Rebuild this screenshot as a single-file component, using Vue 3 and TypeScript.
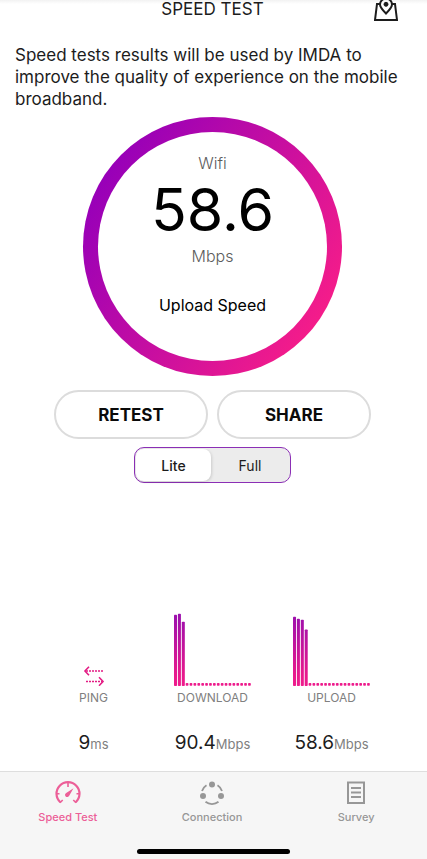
<script setup lang="ts">
import { ref } from 'vue'

interface Stat {
  label: string
  value: string
  unit: string
  bars: number[]
}

const mode = ref<'Lite' | 'Full'>('Lite')
const modes = ['Lite', 'Full'] as const

const idle = (count: number): number[] => Array.from({ length: count }, () => 3)

const stats: Stat[] = [
  { label: 'PING', value: '9', unit: 'ms', bars: [] },
  { label: 'DOWNLOAD', value: '90.4', unit: 'Mbps', bars: [73, 74, 66, ...idle(17)] },
  { label: 'UPLOAD', value: '58.6', unit: 'Mbps', bars: [71, 69, 68, 58, ...idle(16)] },
]
</script>

<template>
  <div class="screen">
    <header class="top">
      <h1>SPEED TEST</h1>
      <button class="map" type="button" aria-label="Map">
        <svg width="24" height="28" viewBox="0 0 24 28" fill="none" stroke="#1c1c1c" stroke-width="2">
          <path d="M6 11H3L1 27H23L21 11H18" />
          <path d="M12 20.500C8.500 17 6 14.500 6 11.500A6 6 0 0 1 18 11.500C18 14.500 15.500 17 12 20.500Z" />
          <circle cx="12" cy="11.300" r="2" fill="#1c1c1c" stroke-width="1" />
        </svg>
      </button>
    </header>

    <main>
      <p class="intro">
        Speed tests results will be used by IMDA to improve the quality of experience on the mobile broadband.
      </p>

      <section class="ring">
        <div class="dial">
          <span class="muted">Wifi</span>
          <strong>58.6</strong>
          <span class="muted">Mbps</span>
          <span class="kind">Upload Speed</span>
        </div>
      </section>

      <div class="actions">
        <button type="button">RETEST</button>
        <button type="button">SHARE</button>
      </div>

      <div class="segment" role="radiogroup" aria-label="Test mode">
        <label v-for="m in modes" :key="m" :class="{ on: mode === m }">
          <input v-model="mode" type="radio" name="mode" :value="m" />
          {{ m }}
        </label>
      </div>

      <section class="stats">
        <div v-for="s in stats" :key="s.label" class="stat">
          <svg v-if="s.bars.length" width="77" height="74" viewBox="0 0 79 74" preserveAspectRatio="xMidYMax meet">
            <defs>
              <linearGradient :id="'g' + s.label" gradientUnits="userSpaceOnUse" x1="0" y1="0" x2="0" y2="74">
                <stop offset="0" stop-color="#9a0fae" />
                <stop offset="0.850" stop-color="#e8198c" />
                <stop offset="1" stop-color="#ee1c8c" />
              </linearGradient>
            </defs>
            <rect
              v-for="(h, i) in s.bars"
              :key="i"
              :x="i * 4"
              :y="h > 3 ? 74 - h : 71"
              :width="h > 3 ? 3.1 : 2.8"
              :height="h > 3 ? h : 2.8"
              rx="0.8"
              :fill="`url(#g${s.label})`"
            />
          </svg>
          <svg v-else width="20" height="20" viewBox="0 0 20 20" fill="none" stroke="#e31c84" stroke-width="1.6">
            <path d="M5 0.800L0.900 5L5 9.200M15 11.300L19.100 15.500L15 19.700" stroke-linejoin="round" />
            <path d="M2 5H19M2 15.500H18" stroke-dasharray="2 1" />
          </svg>
          <span class="name">{{ s.label }}</span>
          <span class="value">{{ s.value }}<small>{{ s.unit }}</small></span>
        </div>
      </section>
    </main>

    <footer>
      <nav>
        <a href="#speed" class="active">
          <svg width="28" height="24" viewBox="0 0 28 24" fill="none" stroke="currentColor">
            <path d="M6.300 21.200A11.500 11.500 0 1 1 21.700 21.200" stroke-width="2.200" />
            <path d="M6 21.800L8.700 19M22 21.800L19.300 19M14 2V6M3 12.700H5.500M22.500 12.700H25" stroke-width="1.600" />
            <path d="M19.500 7.200L15.200 14.800A2.200 2.200 0 1 1 12.200 11.900Z" fill="currentColor" stroke="none" />
          </svg>
          Speed Test
        </a>
        <a href="#connection">
          <svg width="28" height="24" viewBox="0 0 28 24" fill="none" stroke="currentColor" stroke-width="1.800">
            <path d="M4 10A10.500 10.500 0 0 1 8.500 4.200M19.500 4.200A10.500 10.500 0 0 1 24 10M7.500 20.800A10.500 10.500 0 0 0 20.500 20.800" />
            <g fill="currentColor" stroke="none">
              <circle cx="14" cy="3.500" r="3" /><circle cx="5" cy="15" r="3" /><circle cx="23" cy="15" r="3" />
            </g>
          </svg>
          Connection
        </a>
        <a href="#survey">
          <svg width="28" height="24" viewBox="0 0 28 24" fill="none" stroke="currentColor" stroke-width="2">
            <path d="M6 1.500H22V22H6Z" />
            <path d="M9 7H19M9 11.500H19M9 16H19" />
          </svg>
          Survey
        </a>
      </nav>
      <div class="home"></div>
    </footer>
  </div>
</template>

<style>
body {
  background: #fff;
}
</style>

<style scoped>
.screen {
  min-height: 100vh;
  display: flex;
  flex-direction: column;
  overflow: hidden;
  box-sizing: border-box;
  background: linear-gradient(#f2f2f2, #fff 4px);
  color: #1c1c1c;
  font-family: Inter, "Liberation Sans", sans-serif;
}
button {
  font: inherit;
  color: inherit;
  background: none;
  border: 0;
  padding: 0;
}
.top {
  display: grid;
  grid-template-columns: 1fr auto 1fr;
  height: 20px;
  padding: 0 29px 0 27px;
}
h1 {
  grid-column: 2;
  margin: -1px 0 0;
  font-size: 17px;
  line-height: 20px;
  font-weight: 400;
}
.map {
  justify-self: end;
  height: 28px;
  margin-top: -7px;
}
.map svg {
  display: block;
}
main {
  flex: 1;
  display: flex;
  flex-direction: column;
  align-items: center;
  padding-right: 2px;
}
.intro {
  align-self: stretch;
  margin: 24px 13px 7px 15px;
  font-size: 17px;
  line-height: 22px;
}
.ring {
  width: 259px;
  height: 259px;
  box-sizing: border-box;
  padding: 15px;
  border-radius: 50%;
  background: linear-gradient(122deg, #9800b8 14%, #f41c8a 86%);
}
.dial {
  height: 100%;
  box-sizing: border-box;
  padding-top: 19px;
  border-radius: 50%;
  background: #fff;
  display: flex;
  flex-direction: column;
  align-items: center;
  color: #000;
}
.muted {
  font-size: 16px;
  line-height: 24px;
  color: #5c5c5c;
  font-weight: 300;
}
.dial strong {
  font-size: 59px;
  line-height: 69px;
  font-weight: 400;
}
.kind {
  margin-top: 25px;
  font-size: 16px;
  line-height: 24px;
}
.actions {
  display: flex;
  gap: 9px;
  margin-top: 14px;
}
.actions button {
  width: 154px;
  height: 49px;
  border: 2px solid #dcdcdc;
  border-radius: 25px;
  font-size: 17px;
  font-weight: 700;
  color: #0a0a0a;
}
.segment {
  display: grid;
  grid-template-columns: 75px 1fr;
  width: 157px;
  height: 36px;
  margin-top: 8px;
  box-sizing: border-box;
  padding: 1px;
  border: 1px solid #8b2fb5;
  border-radius: 10px;
  background: #ececec;
}
.segment label {
  position: relative;
  display: flex;
  align-items: center;
  justify-content: center;
  border-radius: 8px;
  font-size: 14px;
}
.segment label.on {
  background: #fff;
  font-weight: 500;
  box-shadow: 1px 1px 3px #0002;
}
.segment input {
  position: absolute;
  inset: 0;
  margin: 0;
  opacity: 0;
}
.stats {
  align-self: stretch;
  display: grid;
  grid-template-columns: repeat(3, 1fr);
  margin: auto 34px 14px;
}
.stat {
  display: flex;
  flex-direction: column;
  align-items: center;
  justify-content: flex-end;
}
.name {
  margin-top: 4px;
  font-size: 12px;
  line-height: 16px;
  color: #808080;
}
.value {
  margin-top: 24px;
  font-size: 19px;
  line-height: 26px;
}
.value small {
  font-size: 13px;
  color: #808080;
}
footer {
  border-top: 1px solid #dedede;
  background: #f6f6f6;
}
nav {
  display: grid;
  grid-template-columns: 8fr 9fr 8fr;
  padding: 9px 3px 0 0;
}
nav a {
  display: flex;
  flex-direction: column;
  align-items: center;
  gap: 4px;
  font-size: 11px;
  line-height: 16px;
  font-weight: 500;
  color: #979797;
  text-decoration: none;
}
nav a.active {
  color: #ec5f98;
}
.home {
  width: 153px;
  height: 5px;
  margin: 24px auto 5px;
  border-radius: 3px;
  background: #000;
}
</style>
